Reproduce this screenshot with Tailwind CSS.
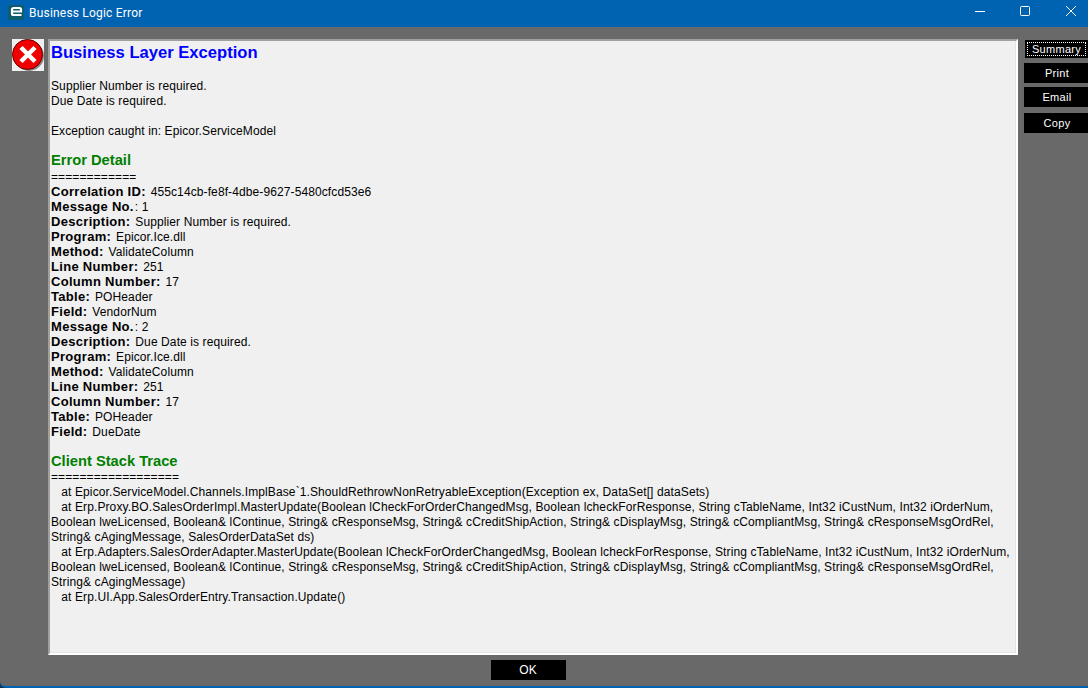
<!DOCTYPE html>
<html lang="en">
<head>
  <meta charset="UTF-8">
  <title>Business Logic Error</title>
  <script src="https://cdn.jsdelivr.net/npm/@tailwindcss/browser@4"></script>
</head>
<body class="w-[1088px] h-[688px] overflow-hidden bg-[#0a3050] font-['Liberation_Sans',Arial,sans-serif]">

  <div class="flex flex-col h-[688px] bg-[#696969] border-b-2 border-[#0063b1] rounded-bl-[6px] overflow-hidden">

    <!-- title bar -->
    <div class="flex items-center justify-between h-[27px] shrink-0 bg-[#0063b1] text-white">
      <div class="flex items-center pl-[8px] pb-[2px]">
        <svg class="w-[16px] h-[15px]" viewBox="0 0 16 15">
          <rect width="16" height="15" fill="#0d5c70"/>
          <path d="M5 6.500h8v-2a1.500 1.500 0 0 0-1.500-1.500h-6a1.500 1.500 0 0 0-1.500 1.500v4a1.500 1.500 0 0 0 1.500 1.500h8" fill="none" stroke="#fff" stroke-width="2.200"/>
        </svg>
        <span class="ml-[5px] text-[12px] font-['Roboto',sans-serif] tracking-[0.2px]">Business Logic Error</span>
      </div>
      <div class="flex items-center">
        <svg class="w-[46px] h-[27px]" viewBox="0 0 46 27"><path d="M25 11.500h10" stroke="#fff" fill="none"/></svg>
        <svg class="w-[46px] h-[27px]" viewBox="0 0 46 27"><rect x="24.500" y="6.500" width="9" height="9" rx="1" stroke="#fff" fill="none"/></svg>
        <svg class="w-[46px] h-[27px]" viewBox="0 0 46 27"><path d="M24 6l10 10M34 6l-10 10" stroke="#fff" fill="none"/></svg>
      </div>
    </div>

    <div class="flex flex-1 pt-[12px]">
      <!-- error icon -->
      <div class="w-[48px] shrink-0 pl-[12px]">
        <svg class="w-[32px] h-[32px]" viewBox="0 0 32 32">
          <rect width="32" height="32" fill="#f0f0f0"/>
          <circle cx="17" cy="17" r="15" fill="#8a8a8a"/>
          <circle cx="15.500" cy="15.500" r="15" fill="#f00000" stroke="#600" stroke-width="1"/>
          <path d="M9 8.500l14 14M23 8.500l-14 14" stroke="#fff" stroke-width="4.500"/>
        </svg>
      </div>

      <!-- message box -->
      <div class="w-[970px] h-[616px] shrink-0 bg-[#f0f0f0] border-2 border-t-[#a0a0a0] border-l-[#a0a0a0] border-r-white border-b-white shadow-[inset_-1px_-1px_0_#e3e3e3] pl-[1px] text-[12px] leading-[15px] tracking-[0.105px] text-black [&_b]:text-[13px] [&_b]:tracking-[0.3px] [&_b]:leading-[12px] [&_b]:mr-[-2px]">
        <h1 class="text-[16.6px] tracking-normal leading-[20px] font-bold text-[#0000ff] mt-[2px]">Business Layer Exception</h1>
        <div class="mt-[16px]">Supplier Number is required.</div>
        <div>Due Date is required.</div>
        <div class="mt-[15px]">Exception caught in: Epicor.ServiceModel</div>

        <h2 class="text-[14.7px] tracking-normal leading-[17px] font-bold text-[#008000] mt-[13px]">Error Detail</h2>
        <div class="mt-[1px]">============</div>
        <div><b>Correlation ID:</b>&nbsp; 455c14cb-fe8f-4dbe-9627-5480cfcd53e6</div>
        <div><b>Message No.</b><span class="ml-[3px]">:</span> 1</div>
        <div><b>Description:</b>&nbsp; Supplier Number is required.</div>
        <div><b>Program:</b>&nbsp; Epicor.Ice.dll</div>
        <div><b>Method:</b>&nbsp; ValidateColumn</div>
        <div><b>Line Number:</b>&nbsp; 251</div>
        <div><b>Column Number:</b>&nbsp; 17</div>
        <div><b>Table:</b>&nbsp; POHeader</div>
        <div><b>Field:</b>&nbsp; VendorNum</div>
        <div><b>Message No.</b><span class="ml-[3px]">:</span> 2</div>
        <div><b>Description:</b>&nbsp; Due Date is required.</div>
        <div><b>Program:</b>&nbsp; Epicor.Ice.dll</div>
        <div><b>Method:</b>&nbsp; ValidateColumn</div>
        <div><b>Line Number:</b>&nbsp; 251</div>
        <div><b>Column Number:</b>&nbsp; 17</div>
        <div><b>Table:</b>&nbsp; POHeader</div>
        <div><b>Field:</b>&nbsp; DueDate</div>

        <h2 class="text-[14.7px] tracking-normal leading-[17px] font-bold text-[#008000] mt-[13px]">Client Stack Trace</h2>
        <div>==================</div>
        <div class="whitespace-nowrap">
          <div>&nbsp;&nbsp; at Epicor.ServiceModel.Channels.ImplBase`1.ShouldRethrowNonRetryableException(Exception ex, DataSet[] dataSets)</div>
          <div>&nbsp;&nbsp; at Erp.Proxy.BO.SalesOrderImpl.MasterUpdate(Boolean lCheckForOrderChangedMsg, Boolean lcheckForResponse, String cTableName, Int32 iCustNum, Int32 iOrderNum,</div>
          <div>Boolean lweLicensed, Boolean&amp; lContinue, String&amp; cResponseMsg, String&amp; cCreditShipAction, String&amp; cDisplayMsg, String&amp; cCompliantMsg, String&amp; cResponseMsgOrdRel,</div>
          <div>String&amp; cAgingMessage, SalesOrderDataSet ds)</div>
          <div>&nbsp;&nbsp; at Erp.Adapters.SalesOrderAdapter.MasterUpdate(Boolean lCheckForOrderChangedMsg, Boolean lcheckForResponse, String cTableName, Int32 iCustNum, Int32 iOrderNum,</div>
          <div>Boolean lweLicensed, Boolean&amp; lContinue, String&amp; cResponseMsg, String&amp; cCreditShipAction, String&amp; cDisplayMsg, String&amp; cCompliantMsg, String&amp; cResponseMsgOrdRel,</div>
          <div>String&amp; cAgingMessage)</div>
          <div>&nbsp;&nbsp; at Erp.UI.App.SalesOrderEntry.Transaction.Update()</div>
        </div>
      </div>

      <!-- side buttons -->
      <div class="flex flex-col flex-1 pl-[6px] text-white text-[11px] tracking-[0.3px]">
        <button class="ml-[1px] h-[18px] mt-[1px] bg-black px-[2px] flex items-center">
          <span class="block w-full leading-[12px] border border-dotted border-white">Summary</span>
        </button>
        <button class="h-[20px] mt-[5px] pl-[2px] bg-black">Print</button>
        <button class="h-[20px] mt-[4px] pl-[2px] bg-black">Email</button>
        <button class="h-[20px] mt-[6px] pl-[2px] bg-black">Copy</button>
      </div>
    </div>

    <!-- ok -->
    <div class="flex justify-center h-[31px] shrink-0 pt-[5px]">
      <button class="w-[75px] h-[20px] bg-black text-white text-[12px] -translate-x-[16px]">OK</button>
    </div>
  </div>

</body>
</html>
